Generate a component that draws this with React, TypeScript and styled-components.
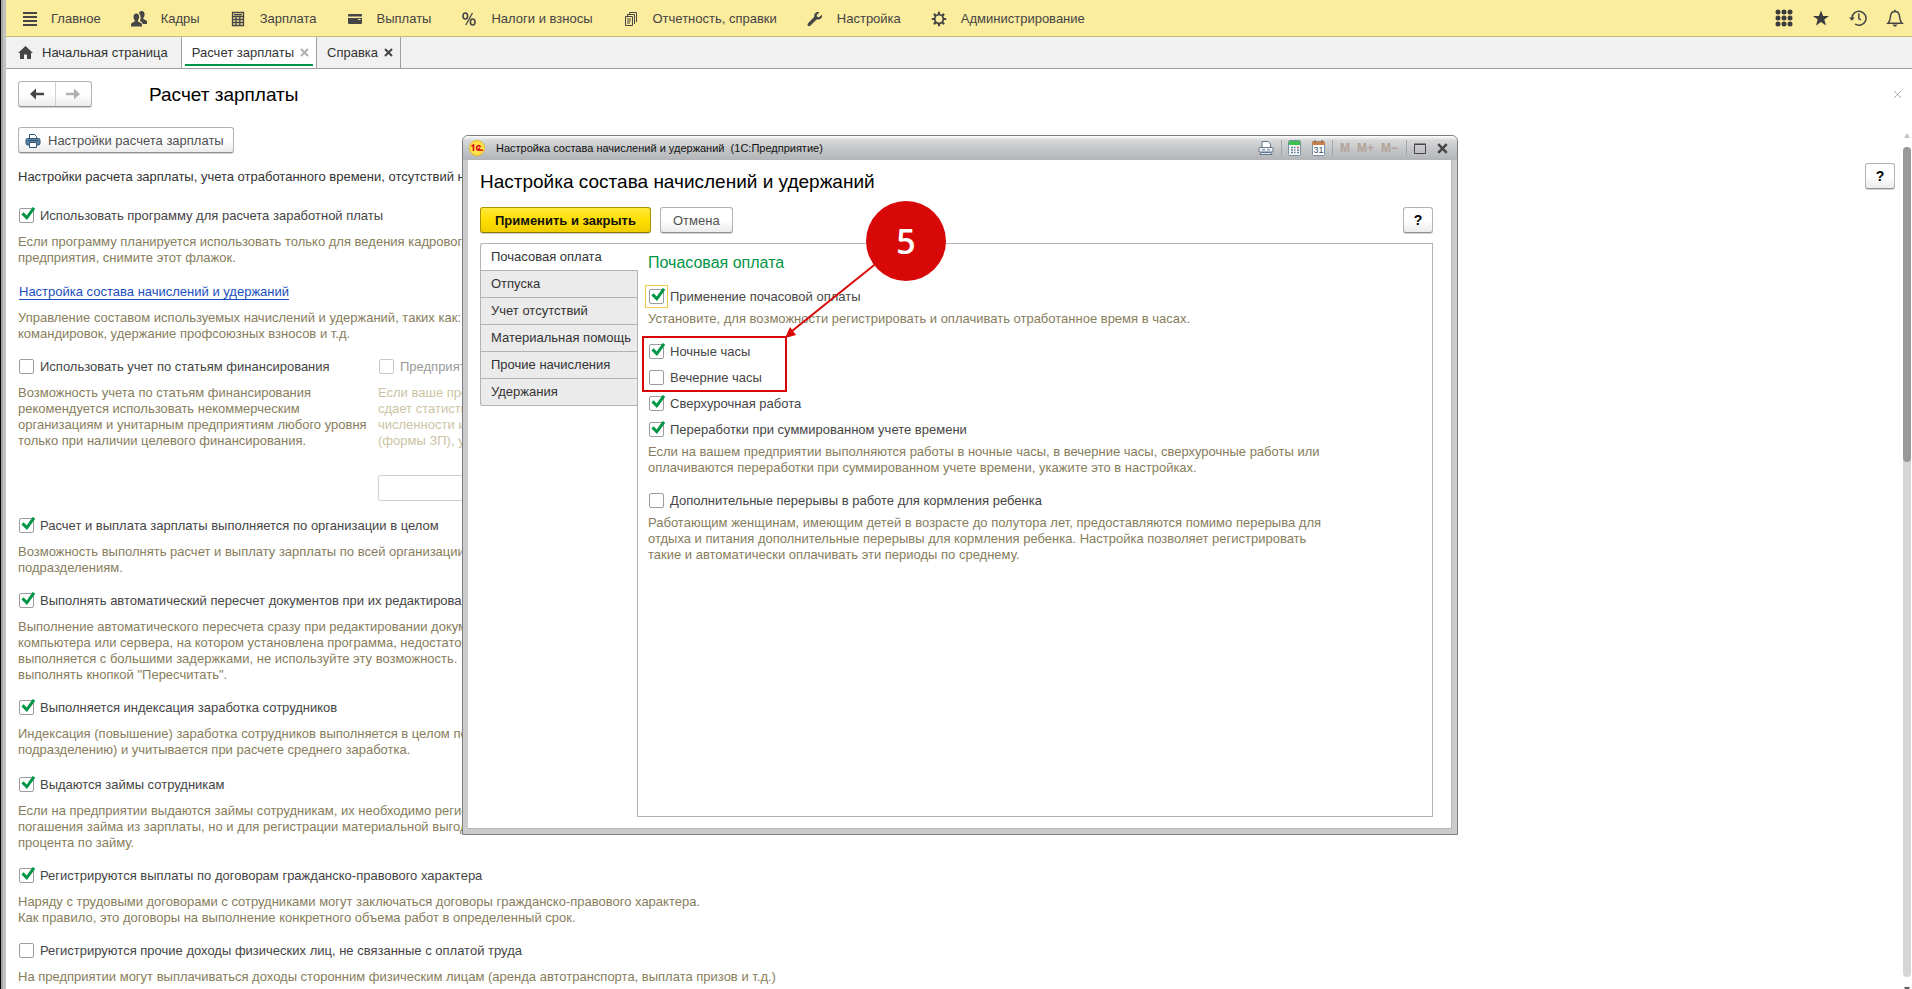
import React from "react";
import styled, { createGlobalStyle, css } from "styled-components";

const GlobalStyle = createGlobalStyle`
  * { box-sizing: border-box; }
  body {
    margin: 0;
    background: #fff;
    color: #454545;
    font: 13px/16px "Liberation Sans", Arial, sans-serif;
  }
  button, input { font: inherit; color: inherit; }
  svg { display: block; flex: none; }
`;

const Frame = styled.div`
  position: relative;
  display: flex;
  flex-direction: column;
  height: 100vh;
  overflow: hidden;
  border-left: 1px solid #000;
  box-shadow: inset 2px 0 #a9a6a6, inset 5px 0 #c3c0c0;
  padding-left: 5px;
`;

const MenuBar = styled.nav`
  display: flex;
  align-items: center;
  height: 37px;
  padding: 0 8px 0 15px;
  background: #fbec9e;
  border-bottom: 1px solid #c9bd7c;
`;

const MenuItems = styled.div`
  display: flex;
  flex: 1;
  gap: 30px;
`;

const MenuItem = styled.button`
  display: flex;
  align-items: center;
  gap: 14px;
  padding: 1px 0 0;
  border: 0;
  background: none;
  white-space: nowrap;
  color: #454545;
`;

const MenuTools = styled.div`
  display: flex;
  gap: 19px;
`;

const IconButton = styled.button`
  display: flex;
  align-items: center;
  justify-content: center;
  padding: 0;
  border: 0;
  background: none;
  color: #454545;
`;

const TabBar = styled.div`
  display: flex;
  height: 32px;
  background: #f1f1f1;
  border-bottom: 1px solid #a0a0a0;
`;

const PageTab = styled.div<{ $active?: boolean; $home?: boolean }>`
  display: flex;
  align-items: center;
  gap: ${(p) => (p.$home ? 9 : 6)}px;
  padding: ${(p) => (p.$home ? "0 13px 0 12px" : "0 7px 0 10px")};
  border-right: 1px solid #a0a0a0;
  white-space: nowrap;
  color: #333;
  ${(p) =>
    p.$active &&
    css`
      background: linear-gradient(#009646, #009646) center bottom 2px / calc(100% - 6px) 2px no-repeat #fff;
    `}
`;

const PageHeader = styled.header`
  display: flex;
  align-items: center;
  height: 38px;
  padding: 12px 10px 0 12px;
`;

const raised = css`
  height: 26px;
  border: 1px solid #b3b3b3;
  border-bottom-color: #8f8f8f;
  border-radius: 3px;
  background: linear-gradient(#fff 50%, #ececec);
  box-shadow: 0 1px 0 #d4d4d4;
`;

const HistoryButtons = styled.div`
  ${raised}
  display: flex;
  width: 74px;
  margin-right: 57px;
  button { flex: 1; }
  button + button { border-left: 1px solid #d0d0d0; }
`;

const Title = styled.h1`
  flex: 1;
  margin: 0;
  padding-top: 2px;
  font-size: 19px;
  line-height: 22px;
  font-weight: 400;
  color: #000;
`;

const Workspace = styled.div`
  display: flex;
  flex: 1;
  min-height: 0;
`;

const Settings = styled.main`
  flex: 1;
  min-width: 0;
  padding: 20px 8px 0 12px;
  white-space: nowrap;
`;

const Button = styled.button`
  ${raised}
  display: inline-flex;
  align-items: center;
  justify-content: center;
  gap: 7px;
  padding: 2px 12px 0;
  white-space: nowrap;
  color: #505050;
`;

const PrimaryButton = styled(Button)`
  padding: 2px 14px 0;
  border-color: #a89200;
  border-bottom-color: #8a7800;
  background: linear-gradient(#ffe83a, #ffdf00 50%, #f0ce00);
  font-weight: 700;
  color: #111;
`;

const HelpButton = styled(Button)`
  width: 30px;
  padding: 0;
  font-weight: 700;
  font-size: 14px;
  color: #000;
`;

const PrintButton = styled(Button)`
  display: flex;
  padding: 2px 9px 0 6px;
`;

const Intro = styled.div`
  display: flex;
  align-items: center;
  justify-content: space-between;
  margin: 10px 0 19px;
  color: #333;
  span { padding-top: 2px; }
`;

const Group = styled.section<{ $after?: number }>`
  margin-bottom: ${(p) => p.$after ?? 17}px;
`;

const Columns = styled.div`
  display: grid;
  grid-template-columns: 360px 1fr;
`;

const CheckLabel = styled.label<{ $disabled?: boolean }>`
  display: flex;
  gap: 6px;
  height: 16px;
  margin-left: 1px;
  white-space: nowrap;
  opacity: ${(p) => (p.$disabled ? 0.55 : 1)};
`;

const CheckBox = styled.span<{ $focused?: boolean }>`
  position: relative;
  width: 15px;
  height: 15px;
  outline: ${(p) => (p.$focused ? "1px solid #f7c948" : "none")};
  outline-offset: 3px;
  input {
    display: block;
    appearance: none;
    width: 15px;
    height: 15px;
    margin: 0;
    border: 1px solid #9c9c9c;
    border-radius: 2px;
    background: #fff;
  }
  svg {
    position: absolute;
    top: -1px;
    left: 2px;
    display: none;
    pointer-events: none;
  }
  input:checked + svg { display: block; }
`;

const Hint = styled.p<{ $faded?: boolean }>`
  margin: 10px 0 0;
  white-space: pre-line;
  color: ${(p) => (p.$faded ? "#cbc4a4" : "#877d5c")};
`;

const SettingsLink = styled.a`
  display: block;
  width: max-content;
  height: 17px;
  margin-left: 1px;
  line-height: 18px;
  color: #1a4fc0;
  text-decoration: none;
  border-bottom: 1px solid #1a4fc0;
`;

const TextBox = styled.input`
  width: 220px;
  height: 26px;
  margin-top: 26px;
  border: 1px solid #cfcfcf;
  border-radius: 3px;
  background: #fff;
`;

const Rail = styled.div`
  display: flex;
  flex-direction: column;
  align-items: center;
  width: 9px;
  padding: 26px 1px 0 0;
`;

const Track = styled.div`
  flex: 1;
  width: 8px;
  margin: 9px 0 10px;
  border-radius: 4px;
  background: #d5d5d5;
`;

const Thumb = styled.div`
  height: 38%;
  border-radius: 4px;
  background: #999;
`;

const Dialog = styled.section`
  position: absolute;
  left: 461px;
  top: 135px;
  display: flex;
  flex-direction: column;
  width: 996px;
  height: 700px;
  border: 1px solid #7c7f82;
  border-radius: 6px 6px 0 0;
  background: #c9cbcc;
  padding: 0 5px 5px;
`;

const DialogBar = styled.header`
  display: flex;
  align-items: center;
  height: 24px;
  margin: 0 -5px;
  padding: 0 9px 0 6px;
  border-radius: 5px 5px 0 0;
  background: linear-gradient(#fff, #d8d9da 4px, #c6c8ca 50%, #b2b4b7);
  color: #111;
  font-size: 11px;
`;

const DialogCaption = styled.span`
  flex: 1;
  padding-left: 11px;
  white-space: pre;
`;

const ToolGroup = styled.div<{ $last?: boolean; $tight?: boolean }>`
  display: flex;
  align-items: center;
  gap: ${(p) => (p.$tight ? 5 : 11)}px;
  height: 16px;
  padding: 0 7px 0 6px;
  border-left: 1px solid #a3a5a8;
  &:first-of-type { border-left: 0; }
  ${(p) => p.$last && "padding: 0 0 0 7px;"}
`;

const MemoryButton = styled.button`
  padding: 0 1px;
  border: 0;
  background: none;
  color: #b3a398;
  font-size: 12px;
  font-weight: 700;
`;

const DialogBody = styled.div`
  display: flex;
  flex: 1;
  flex-direction: column;
  padding: 11px 18px 11px 12px;
  border-right: 1px solid #b3b5b7;
  border-bottom: 1px solid #b3b5b7;
  background: #fff;
`;

const DialogTitle = styled.h2`
  margin: 0 0 14px;
  font-size: 19px;
  line-height: 22px;
  font-weight: 400;
  color: #000;
`;

const Commands = styled.div`
  display: flex;
  gap: 9px;
  margin-bottom: 10px;
  ${HelpButton} { margin-left: auto; }
`;

const TabbedPanel = styled.div`
  display: flex;
  flex: 1;
`;

const SideTabs = styled.div`
  display: flex;
  flex-direction: column;
  width: 157px;
`;

const SideTab = styled.button<{ $active?: boolean }>`
  position: relative;
  height: 27px;
  padding: 0 0 0 10px;
  border: solid #b3b3b3;
  border-width: 1px 0 0 1px;
  background: #ebebeb;
  text-align: left;
  white-space: nowrap;
  color: #333;
  &:first-child { border-top-left-radius: 3px; }
  &:last-child { height: 28px; border-bottom-width: 1px; border-bottom-left-radius: 3px; }
  ${(p) =>
    p.$active &&
    css`
      z-index: 1;
      margin-right: -1px;
      background: #fff;
    `}
`;

const Panel = styled.div`
  flex: 1;
  padding: 9px 10px;
  border: 1px solid #b3b3b3;
`;

const PanelTitle = styled.h3`
  margin: 0 0 16px;
  font-size: 16px;
  line-height: 20px;
  font-weight: 400;
  color: #009646;
`;

const CheckStack = styled.div`
  display: grid;
  gap: 10px;
  margin: 17px 0 0;
`;

const PanelHint = styled(Hint)`
  margin-top: 6px;
`;

const Spaced = styled.div`
  margin-top: 17px;
`;

const Callout = styled.svg`
  position: absolute;
  left: 641px;
  top: 200px;
  pointer-events: none;
`;

function Check({ text, checked, disabled, focused }: { text: string; checked?: boolean; disabled?: boolean; focused?: boolean }) {
  return (
    <CheckLabel $disabled={disabled}>
      <CheckBox $focused={focused}>
        <input type="checkbox" defaultChecked={checked} disabled={disabled} />
        <svg width="15" height="14" viewBox="0 0 15 14">
          <path d="M1.500 6.400 5.800 10.800 13 .8" fill="none" stroke="#009646" strokeWidth="3" />
        </svg>
      </CheckBox>
      {text}
    </CheckLabel>
  );
}

const Cross = ({ size = 9, color = "#454545", width = 2 }: { size?: number; color?: string; width?: number }) => (
  <svg width={size} height={size} viewBox="0 0 9 9">
    <path d="M1 1 8 8M8 1 1 8" stroke={color} strokeWidth={width} fill="none" />
  </svg>
);

const Arrow = ({ color, flip }: { color: string; flip?: boolean }) => (
  <svg width="14" height="12" viewBox="0 0 14 12">
    <path d={flip ? "M14 6 8 .5V4.8H0V7.2H8V11.5Z" : "M0 6 6 .5V4.8H14V7.2H6V11.5Z"} fill={color} />
  </svg>
);

const ink = "#454545";

const icons = {
  lines: (
    <svg width="16" height="16" viewBox="0 0 16 16"><path d="M2 2h14M2 6h14M2 10h14M2 14h14" stroke={ink} strokeWidth="2" /></svg>
  ),
  people: (
    <svg width="16" height="16" viewBox="0 0 16 16" fill={ink}>
      <path d="M8 2.500C8.300 .8 9.500 0 10.800 0 12.500 0 13.600 1.300 13.600 3.200 13.600 5 12.900 5.900 12.300 6.900V8L15.500 9.600C16 10 16 11 16 13H11.800C11.500 11.400 10.500 10.700 8.900 10 9.900 8.400 10.300 4.500 8 2.500Z" />
      <path d="M5.300 2.500C7.200 2.500 8.200 3.900 8.200 5.800 8.200 7.300 7.600 8.500 7 9.300V10.500L10.200 12C10.900 12.500 11 13.500 11 15.500H0C0 13.500 0 12.500 .7 12L3.700 10.500V9.300C3 8.500 2.500 7.300 2.500 5.800 2.500 3.900 3.500 2.500 5.300 2.500Z" />
    </svg>
  ),
  calc: (
    <svg width="16" height="16" viewBox="0 0 16 16"><path d="M2.500 1.500h11v13h-11zM2.500 5.500h11M6 5.500v9M9.800 5.500v9M2.500 8.500h11M2.500 11.500h11" fill="none" stroke={ink} strokeWidth="1.300" /><path d="M4 3h8v1.300H4z" fill={ink} /></svg>
  ),
  card: (
    <svg width="16" height="16" viewBox="0 0 16 16"><path d="M2 3h12a1 1 0 0 1 1 1v1.500H1V4a1 1 0 0 1 1-1zM1 7h14v5a1 1 0 0 1-1 1H2a1 1 0 0 1-1-1z" fill={ink} /><path d="M11 8.500h2.500" stroke="#fbec9e" /></svg>
  ),
  percent: (
    <svg width="16" height="16" viewBox="0 0 16 16" fill="none" stroke={ink}><ellipse cx="4.300" cy="5" rx="2.300" ry="3" strokeWidth="1.600" /><ellipse cx="11.700" cy="11" rx="2.300" ry="3" strokeWidth="1.600" /><path d="M11.500 2 4.800 14" strokeWidth="1.300" /></svg>
  ),
  docs: (
    <svg width="16" height="16" viewBox="0 0 16 16" fill="none" stroke={ink}><path d="M2.500 5.500h7v9h-7zM4.500 5V3.500h7v9.500M6.500 3V1.500h7V11M4 8h4M4 10h4M4 12h3" /></svg>
  ),
  wrench: (
    <svg width="16" height="16" viewBox="0 0 16 16"><path d="M15 3.800 12 6.300 10 5.800 9.700 4 12.500 1.200C9.500.2 6.800 2.400 7.200 6L1 12.200C.3 13 .4 14 1 14.700 1.800 15.400 2.800 15.300 3.500 14.600L9.500 8.500C13.200 9 15.600 6.800 15 3.800Z" fill={ink} /></svg>
  ),
  gear: (
    <svg width="16" height="16" viewBox="0 0 16 16" fill="none" stroke={ink}><circle cx="8" cy="8" r="4.300" strokeWidth="1.800" /><path d="M8 .8v3M8 12.200v3M.8 8h3M12.200 8h3M2.900 2.900 5 5M11 11l2.100 2.100M13.100 2.900 11 5M5 11l-2.100 2.100" strokeWidth="2.200" /></svg>
  ),
  home: (
    <svg width="15" height="13" viewBox="0 0 15 13"><path d="M7.500 0 15 7H13V13H9V8.500H6V13H2V7H0Z" fill={ink} /></svg>
  ),
  printer: (
    <svg width="16" height="16" viewBox="0 0 16 16"><path d="M4.500 6V1.500h5L11.500 3.500V6" fill="#fff" stroke="#2f5677" /><rect x="1" y="5.500" width="14" height="6.500" rx="1.500" fill="#5d83a3" stroke="#2f5677" /><path d="M4.500 9.500h7v5h-7z" fill="#fff" stroke="#2f5677" /><path d="M3 7.500h10" stroke="#2f5677" /></svg>
  ),
};

const menu: [keyof typeof icons, string][] = [
  ["lines", "Главное"],
  ["people", "Кадры"],
  ["calc", "Зарплата"],
  ["card", "Выплаты"],
  ["percent", "Налоги и взносы"],
  ["docs", "Отчетность, справки"],
  ["wrench", "Настройка"],
  ["gear", "Администрирование"],
];

const groups: { text: string; checked: boolean; hint: string; after?: number }[] = [
  {
    text: "Расчет и выплата зарплаты выполняется по организации в целом",
    checked: true,
    hint: "Возможность выполнять расчет и выплату зарплаты по всей организации\nподразделениям.",
  },
  {
    text: "Выполнять автоматический пересчет документов при их редактирован",
    checked: true,
    hint: "Выполнение автоматического пересчета сразу при редактировании докуме\nкомпьютера или сервера, на котором установлена программа, недостаточ\nвыполняется с большими задержками, не используйте эту возможность.\nвыполнять кнопкой \"Пересчитать\".",
  },
  {
    text: "Выполняется индексация заработка сотрудников",
    checked: true,
    hint: "Индексация (повышение) заработка сотрудников выполняется в целом по\nподразделению) и учитывается при расчете среднего заработка.",
    after: 19,
  },
  {
    text: "Выдаются займы сотрудникам",
    checked: true,
    hint: "Если на предприятии выдаются займы сотрудникам, их необходимо регис\nпогашения займа из зарплаты, но и для регистрации материальной выгоды\nпроцента по займу.",
  },
  {
    text: "Регистрируются выплаты по договорам гражданско-правового характера",
    checked: true,
    hint: "Наряду с трудовыми договорами с сотрудниками могут заключаться договоры гражданско-правового характера.\nКак правило, это договоры на выполнение конкретного объема работ в определенный срок.",
  },
  {
    text: "Регистрируются прочие доходы физических лиц, не связанные с оплатой труда",
    checked: false,
    hint: "На предприятии могут выплачиваться доходы сторонним физическим лицам (аренда автотранспорта, выплата призов и т.д.)",
  },
];

const sideTabs = ["Почасовая оплата", "Отпуска", "Учет отсутствий", "Материальная помощь", "Прочие начисления", "Удержания"];

function SettingsDialog() {
  return (
    <Dialog role="dialog" aria-labelledby="dialog-title">
      <DialogBar>
        <svg width="16" height="16" viewBox="0 0 16 16">
          <circle cx="8" cy="8" r="7.500" fill="#ffe14a" stroke="#e8bd1c" />
          <path d="M2.500 6.500 4.500 5V11M11.500 6.800C10.500 5 7.500 5.200 7.500 8 7.500 10 8.500 10.300 14 10.300M11.300 8.600H9.300" fill="none" stroke="#d8121a" strokeWidth="1.600" />
        </svg>
        <DialogCaption>Настройка состава начислений и удержаний  (1С:Предприятие)</DialogCaption>
        <ToolGroup>
          <IconButton aria-label="Печать">
            <svg width="16" height="16" viewBox="0 0 16 16"><path d="M4 8V1.500h6L12.500 4V8" fill="#fff" stroke="#62788c" /><rect x="1" y="7.500" width="14" height="4.500" rx="1" fill="#eef2f5" stroke="#62788c" /><path d="M3 12.500h10l1 2H2zM4 9.800h3M9 9.800h3" fill="#dfe5ea" stroke="#62788c" /></svg>
          </IconButton>
        </ToolGroup>
        <ToolGroup>
          <IconButton aria-label="Калькулятор">
            <svg width="13" height="16" viewBox="0 0 13 16"><rect x=".5" y=".5" width="12" height="15" rx="1" fill="#f4f7fa" stroke="#7b90a3" /><path d="M1 1h11v4H1z" fill="#3fc24b" /><path d="M3 7.500h2M3 10h2M3 12.500h2M6 7.500h1.500M6 10h1.500M6 12.500h1.500" stroke="#6b8296" strokeWidth="1.400" /><path d="M9 7.500h2" stroke="#e25555" strokeWidth="1.400" /><path d="M9 10h2M9 12.500h2" stroke="#6b8296" strokeWidth="1.400" /></svg>
          </IconButton>
          <IconButton aria-label="Календарь">
            <svg width="13" height="16" viewBox="0 0 13 16"><rect x=".5" y="1.500" width="12" height="14" rx="1" fill="#fff" stroke="#7b90a3" /><path d="M0 1.500h13V5H0z" fill="#c8814e" /><path d="M3 0v3M10 0v3" stroke="#8f5730" /><text x="6.500" y="13" textAnchor="middle" fontSize="9" fill="#334a5e">31</text></svg>
          </IconButton>
        </ToolGroup>
        <ToolGroup $tight>
          <MemoryButton>M</MemoryButton>
          <MemoryButton>M+</MemoryButton>
          <MemoryButton>M−</MemoryButton>
        </ToolGroup>
        <ToolGroup $last>
          <IconButton aria-label="Развернуть">
            <svg width="12" height="11" viewBox="0 0 12 11"><path d="M.5 1.500h11v9H.5zM0 1h12" fill="none" stroke={ink} /></svg>
          </IconButton>
          <IconButton aria-label="Закрыть"><Cross size={11} width={2} /></IconButton>
        </ToolGroup>
      </DialogBar>
      <DialogBody>
        <DialogTitle id="dialog-title">Настройка состава начислений и удержаний</DialogTitle>
        <Commands>
          <PrimaryButton>Применить и закрыть</PrimaryButton>
          <Button>Отмена</Button>
          <HelpButton>?</HelpButton>
        </Commands>
        <TabbedPanel>
          <SideTabs role="tablist">
            {sideTabs.map((name, i) => (
              <SideTab key={name} role="tab" $active={i === 0} aria-selected={i === 0}>{name}</SideTab>
            ))}
          </SideTabs>
          <Panel role="tabpanel">
            <PanelTitle>Почасовая оплата</PanelTitle>
            <Check text="Применение почасовой оплаты" checked focused />
            <PanelHint>Установите, для возможности регистрировать и оплачивать отработанное время в часах.</PanelHint>
            <CheckStack>
              <Check text="Ночные часы" checked />
              <Check text="Вечерние часы" />
              <Check text="Сверхурочная работа" checked />
              <Check text="Переработки при суммированном учете времени" checked />
            </CheckStack>
            <PanelHint>
              {"Если на вашем предприятии выполняются работы в ночные часы, в вечерние часы, сверхурочные работы или\nоплачиваются переработки при суммированном учете времени, укажите это в настройках."}
            </PanelHint>
            <Spaced><Check text="Дополнительные перерывы в работе для кормления ребенка" /></Spaced>
            <PanelHint>
              {"Работающим женщинам, имеющим детей в возрасте до полутора лет, предоставляются помимо перерыва для\nотдыха и питания дополнительные перерывы для кормления ребенка. Настройка позволяет регистрировать\nтакие и автоматически оплачивать эти периоды по среднему."}
            </PanelHint>
          </Panel>
        </TabbedPanel>
      </DialogBody>
    </Dialog>
  );
}

export default function App() {
  return (
    <Frame>
      <GlobalStyle />
      <MenuBar>
        <MenuItems>
          {menu.map(([icon, label]) => (
            <MenuItem key={label}>{icons[icon]}{label}</MenuItem>
          ))}
        </MenuItems>
        <MenuTools>
          <IconButton aria-label="Все функции">
            <svg width="18" height="18" viewBox="0 0 18 18" fill="#3c3c3c">
              {[3, 9, 15].map((y) => [3, 9, 15].map((x) => <circle key={`${x}-${y}`} cx={x} cy={y} r="2.500" />))}
            </svg>
          </IconButton>
          <IconButton aria-label="Избранное">
            <svg width="18" height="18" viewBox="0 0 18 18"><path d="M9 1.500 11.100 7H17L12.300 10.500 14 16.500 9 13 4 16.500 5.700 10.500 1 7H6.900Z" fill="#3c3c3c" /></svg>
          </IconButton>
          <IconButton aria-label="История">
            <svg width="18" height="18" viewBox="0 0 18 18" fill="none" stroke="#454545" strokeWidth="1.500"><path d="M3 9A7 7 0 1 1 6 15" /><path d="M9.800 4.500V9.500L12 11" /><path d="M0 8.500H5.800L3 11.800Z" fill="#454545" stroke="none" /></svg>
          </IconButton>
          <IconButton aria-label="Уведомления">
            <svg width="18" height="18" viewBox="0 0 18 18" fill="none" stroke="#454545" strokeWidth="1.500"><path d="M2 14.200C4.500 12 4.200 9.500 4.500 7 4.800 4.300 6.500 2.500 9 2.500S13.200 4.300 13.500 7C13.800 9.500 13.500 12 16 14.200Z" /><path d="M9 .8V2.500" /><path d="M6.500 15.500h5L10 17.500H8Z" fill="#454545" stroke="none" /></svg>
          </IconButton>
        </MenuTools>
      </MenuBar>
      <TabBar>
        <PageTab $home>{icons.home}Начальная страница</PageTab>
        <PageTab $active>Расчет зарплаты<IconButton aria-label="Закрыть вкладку"><Cross color="#b0b0b0" /></IconButton></PageTab>
        <PageTab>Справка<IconButton aria-label="Закрыть вкладку"><Cross /></IconButton></PageTab>
      </TabBar>
      <PageHeader>
        <HistoryButtons>
          <IconButton aria-label="Назад"><Arrow color="#454545" /></IconButton>
          <IconButton aria-label="Вперед"><Arrow color="#b0b0b0" flip /></IconButton>
        </HistoryButtons>
        <Title>Расчет зарплаты</Title>
        <IconButton aria-label="Закрыть"><Cross color="#aaa" width={1} /></IconButton>
      </PageHeader>
      <Workspace>
        <Settings>
          <PrintButton>{icons.printer}Настройки расчета зарплаты</PrintButton>
          <Intro>
            <span>Настройки расчета зарплаты, учета отработанного времени, отсутствий на</span>
            <HelpButton>?</HelpButton>
          </Intro>
          <Group>
            <Check text="Использовать программу для расчета заработной платы" checked />
            <Hint>{"Если программу планируется использовать только для ведения кадрового\nпредприятия, снимите этот флажок."}</Hint>
          </Group>
          <Group>
            <SettingsLink href="#">Настройка состава начислений и удержаний</SettingsLink>
            <Hint>{"Управление составом используемых начислений и удержаний, таких как:\nкомандировок, удержание профсоюзных взносов и т.д."}</Hint>
          </Group>
          <Group as={Columns}>
            <div>
              <Check text="Использовать учет по статьям финансирования" />
              <Hint>{"Возможность учета по статьям финансирования\nрекомендуется использовать некоммерческим\nорганизациям и унитарным предприятиям любого уровня\nтолько при наличии целевого финансирования."}</Hint>
            </div>
            <div>
              <Check text="Предприят" disabled />
              <Hint $faded>{"Если ваше пре\nсдает статисти\nчисленности и\n(формы ЗП), ук"}</Hint>
              <TextBox aria-label="Форма отчетности" disabled />
            </div>
          </Group>
          {groups.map((g) => (
            <Group key={g.text} $after={g.after}>
              <Check text={g.text} checked={g.checked} />
              <Hint>{g.hint}</Hint>
            </Group>
          ))}
        </Settings>
        <Rail>
          <svg width="8" height="5" viewBox="0 0 8 5"><path d="M4 0 7 5H1Z" fill="#c4c4c4" /></svg>
          <Track><Thumb /></Track>
          <svg width="8" height="2" viewBox="0 0 8 2"><path d="M1 0H7L6 2H2Z" fill="#606060" /></svg>
        </Rail>
      </Workspace>
      <SettingsDialog />
      <Callout width="305" height="194" viewBox="0 0 305 194">
        <rect x="1" y="137" width="143" height="54" fill="none" stroke="#d90808" strokeWidth="2" />
        <path d="M236 62 150 131" stroke="#d90808" strokeWidth="2" />
        <path d="M143 138 148 127 154 135Z" fill="#d90808" />
        <circle cx="264" cy="41" r="40" fill="#d90808" />
        <text x="264" y="54" textAnchor="middle" fill="#fff" fontFamily="Open Sans, sans-serif" fontSize="34" fontWeight="600">5</text>
      </Callout>
    </Frame>
  );
}
